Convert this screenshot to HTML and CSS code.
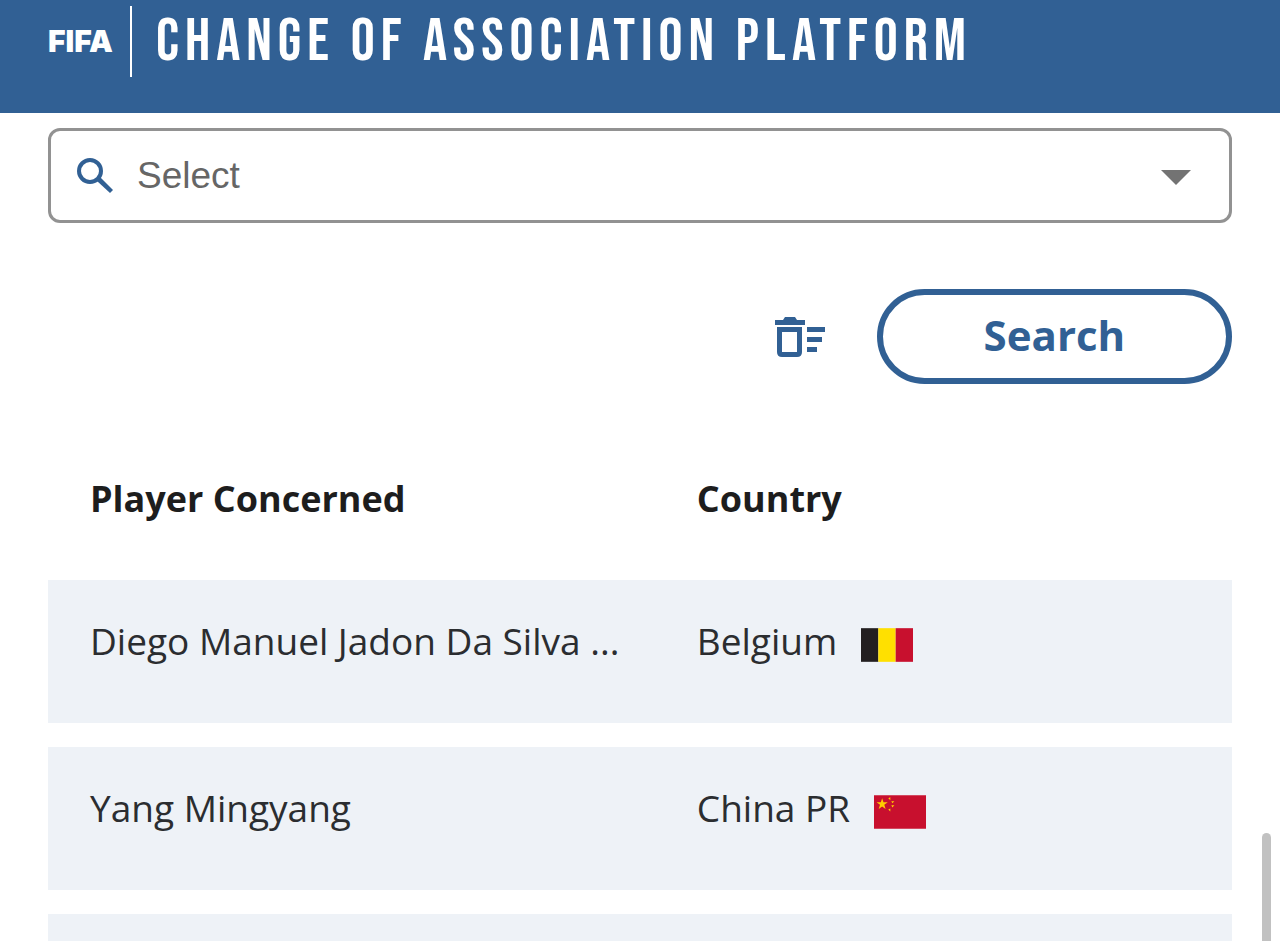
FILE: index.html
```
<!DOCTYPE html>
<html lang="en">
<head>
  <meta charset="UTF-8">
  <title>Change of Association Platform</title>
  <meta name="viewport" content="width=device-width, initial-scale=1.0">
  <link rel="stylesheet" href="styles.css">
</head>
<body>

  <header class="header">
    <div class="logo">FIFA</div>
    <h1>CHANGE OF ASSOCIATION PLATFORM</h1>
  </header>

  <main>
    <form class="filters">
      <div class="select-box">
        <svg class="search-icon" viewBox="0 0 36 36" aria-hidden="true">
          <circle cx="13" cy="13" r="11" fill="none" stroke="currentColor" stroke-width="4"/>
          <path d="M20 20L24 20L36 32L33 35L20 23Z" fill="currentColor"/>
        </svg>
        <select aria-label="Select">
          <option>Select</option>
        </select>
        <svg class="arrow" viewBox="0 0 30 15" aria-hidden="true">
          <path d="M0 0H30L15 15Z" fill="currentColor"/>
        </svg>
      </div>

      <div class="actions">
        <button type="reset" class="clear-button" aria-label="Clear filters">
          <svg viewBox="0 0 50 40" aria-hidden="true">
            <path d="M0 3H8L10 0H20L22 3H30V8H0Z" fill="currentColor"/>
            <path fill-rule="evenodd" d="M2 10H27V35Q27 40 22 40H7Q2 40 2 35ZM7 15V35H22V15Z" fill="currentColor"/>
            <path d="M32 10H50V15H32ZM32 20H47V25H32ZM32 30H42V35H32Z" fill="currentColor"/>
          </svg>
        </button>
        <button type="button" class="search-button">Search</button>
      </div>
    </form>

    <table>
      <thead>
        <tr>
          <th>Player Concerned</th>
          <th>Country</th>
        </tr>
      </thead>
      <tbody>
        <tr>
          <td>Diego Manuel Jadon Da Silva ...</td>
          <td>
            <div class="country">
              <span>Belgium</span>
              <svg class="flag" viewBox="0 0 51 33" aria-hidden="true">
                <path d="M0 0H17V33H0Z" fill="#231f20"/>
                <path d="M17 0H34V33H17Z" fill="#ffe000"/>
                <path d="M34 0H51V33H34Z" fill="#c8102e"/>
              </svg>
            </div>
          </td>
        </tr>
        <tr>
          <td>Yang Mingyang</td>
          <td>
            <div class="country">
              <span>China PR</span>
              <svg class="flag" viewBox="0 0 51 33" aria-hidden="true">
                <path d="M0 0H51V33H0Z" fill="#c8102e"/>
                <path d="M8 3L9.300 7H13.500L10.100 9.500L11.400 13.500L8 11L4.600 13.500L5.900 9.500L2.500 7H6.700Z" fill="#ffcd00"/>
                <path d="M14 3L16 2L16 5ZM17 6L20 6L18 8ZM17 10L20 10L18 12ZM14 14L16 13L16 16Z" fill="#ffcd00"/>
              </svg>
            </div>
          </td>
        </tr>
        <tr>
          <td></td>
          <td></td>
        </tr>
      </tbody>
    </table>
  </main>

  <div class="scroll-thumb"></div>

</body>
</html>
```

FILE: styles.css
```
* { box-sizing: border-box; margin: 0; padding: 0; }

body {
  font-family: "Open Sans", sans-serif;
  font-size: 36px;
  color: #2b2d30;
  background: #fff;
  height: 100vh;
  overflow: hidden;
}

.header {
  display: flex;
  align-items: center;
  background: #316094;
  color: #fff;
  padding: 6px 48px 36px;
}

.logo {
  width: 84px;
  font-family: Inter, sans-serif;
  font-size: 30px;
  font-weight: 900;
  line-height: 71px;
  margin-right: 24px;
  border-right: 2px solid #fff;
}

h1 {
  font-family: "Bebas Neue", "Roboto Condensed", Roboto, sans-serif;
  font-size: 60px;
  font-weight: normal;
  line-height: 64px;
  letter-spacing: 6px;
  white-space: nowrap;
}

main {
  padding: 15px 48px 0;
}

.select-box {
  display: flex;
  align-items: center;
  position: relative;
  height: 95px;
  border: 3px solid #929292;
  border-radius: 12px;
}

.search-icon {
  position: absolute;
  left: 26px;
  width: 36px;
  height: 36px;
  color: #316094;
  pointer-events: none;
}

.arrow {
  position: absolute;
  top: 39px;
  right: 38px;
  width: 30px;
  height: 15px;
  color: #737373;
  pointer-events: none;
}

select {
  appearance: none;
  width: 100%;
  height: 100%;
  padding: 0 80px 0 86px;
  border: none;
  border-radius: 9px;
  background: transparent;
  font-family: "Liberation Sans", sans-serif;
  font-size: 37px;
  color: #666;
}

.actions {
  display: flex;
  justify-content: flex-end;
  align-items: center;
  gap: 52px;
  margin-top: 66px;
}

.clear-button {
  border: none;
  background: none;
  color: #316094;
  cursor: pointer;
}

.clear-button svg {
  display: block;
  width: 50px;
  height: 40px;
}

.search-button {
  width: 30%;
  height: 95px;
  padding-bottom: 4px;
  border: 6px solid #316094;
  border-radius: 48px;
  background: #fff;
  color: #316094;
  font-family: inherit;
  font-size: 42px;
  font-weight: bold;
  cursor: pointer;
}

table {
  width: 100%;
  margin-top: 48px;
  table-layout: fixed;
  border-collapse: separate;
  border-spacing: 0 24px;
}

th, td {
  padding: 0 42px;
  text-align: left;
  white-space: nowrap;
}

th:first-child {
  width: 51%;
}

th:last-child,
td:last-child {
  padding-left: 45px;
}

th {
  height: 100px;
  padding-bottom: 16px;
  color: #1d1d1d;
}

td {
  height: 143px;
  padding-bottom: 22px;
  font-size: 37px;
  background: #eef2f7;
}

.country {
  display: flex;
  align-items: center;
  gap: 24px;
}

.flag {
  width: 52px;
  height: 34px;
  margin-top: 8px;
}

/* overlay scrollbar at the window edge */
.scroll-thumb {
  position: fixed;
  top: 833px;
  right: 9px;
  bottom: -8px;
  width: 9px;
  border-radius: 5px;
  background: #c1c1c1;
}
```
